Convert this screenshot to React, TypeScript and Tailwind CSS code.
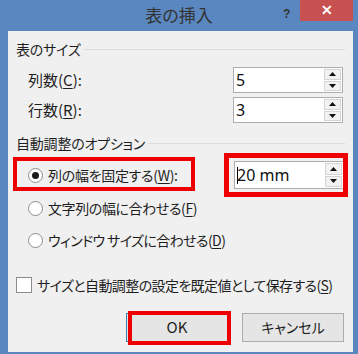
import type { ReactNode } from "react";

const jp = "font-['Meiryo_UI','Noto_Sans_CJK_JP',sans-serif] [font-feature-settings:'palt']";

function Arrow({ up }: { up?: boolean }) {
  return (
    <svg width="7" height="4" viewBox="0 0 7 4" aria-hidden="true">
      {up ? <path d="M0 4 L3.5 0 L7 4 Z" fill="#111" /> : <path d="M0 0 L3.5 4 L7 0 Z" fill="#111" />}
    </svg>
  );
}

function Spin({ value, caret, tall }: { value: string; caret?: boolean; tall?: boolean }) {
  return (
    <div
      className={`flex ${tall ? "h-[28px]" : "h-[26px]"} w-[110px] border border-[#abadb3] bg-white`}
    >
      <div className="flex flex-1 items-center pl-[2px] font-['Noto_Sans',sans-serif] text-[16px] text-[#111]">
        {caret ? <span className="mr-[-1px] h-[17px] w-px bg-black" /> : null}
        {value}
      </div>
      <div className="flex w-[19px] flex-col gap-px bg-white p-px">
        <div className="flex flex-1 items-center justify-center border border-[#d4d4d4] bg-[#f2f2f2]">
          <Arrow up />
        </div>
        <div className="flex flex-1 items-center justify-center border border-[#d4d4d4] bg-[#f2f2f2]">
          <Arrow />
        </div>
      </div>
    </div>
  );
}

function GroupHeader({ children }: { children: ReactNode }) {
  return (
    <div className="flex h-[20px] items-center gap-[3px]">
      <span className="text-[14px] leading-none tracking-[-0.2px]">{children}</span>
      <span className="h-px flex-1 bg-[#dcdcdc]" />
    </div>
  );
}

function Radio({ checked }: { checked?: boolean }) {
  return (
    <span className="flex h-[15px] w-[15px] shrink-0 items-center justify-center rounded-full border border-[#8c8c8c] bg-white">
      {checked ? <span className="h-[7px] w-[7px] rounded-full bg-[#1a1a1a]" /> : null}
    </span>
  );
}

function Key({ k }: { k: string }) {
  return <span className="underline underline-offset-2">{k}</span>;
}

export default function App() {
  return (
    <div className={`flex h-[354px] w-[358px] flex-col bg-[#5b87c0] text-[#1e1e1e] ${jp}`}>
      <div className="flex h-[31px] shrink-0">
        <div className="w-[75px]" />
        <div className="flex flex-1 items-center justify-center pb-[1px] text-[17px] text-[#333]">
          表の挿入
        </div>
        <div className="flex w-[75px] items-start">
          <span className="mt-[5px] w-[17px] font-['Liberation_Sans',sans-serif] text-[12px] font-bold text-[#333]">
            ?
          </span>
          <span className="flex h-[21px] w-[53px] items-center justify-center bg-[#c75050] font-['Liberation_Sans',sans-serif] text-[14px] font-bold text-white">
            ✕
          </span>
        </div>
      </div>

      <div className="mb-[2px] ml-[8px] mr-[5px] flex flex-1 flex-col whitespace-nowrap bg-[#f0f0f0] px-[8px] pt-[8px]">
        <GroupHeader>表のサイズ</GroupHeader>

        <div className="mt-[8px] flex h-[26px] items-center justify-between pl-[12px] pr-[2px] text-[15px]">
          <span>
            列数(<Key k="C" />):
          </span>
          <Spin value="5" />
        </div>
        <div className="mt-[4px] flex h-[26px] items-center justify-between pl-[12px] pr-[2px] text-[15px]">
          <span>
            行数(<Key k="R" />):
          </span>
          <Spin value="3" />
        </div>

        <div className="mt-[10px]">
          <GroupHeader>自動調整のオプション</GroupHeader>
        </div>

        <div className="relative mt-[8px] flex h-[28px] items-center justify-between pl-[12px] pr-[1px] text-[14px] tracking-[-0.3px]">
          <div className="flex items-center gap-[5px]">
            <Radio checked />
            <span>
              列の幅を固定する(<Key k="W" />):
            </span>
          </div>
          <div className="relative tracking-normal">
            <Spin value="20 mm" caret tall />
            <div className="absolute -bottom-[8px] -left-[10px] -right-[4px] -top-[8px] border-[5px] border-[#ee0000]" />
          </div>
          <div className="absolute -top-[4px] left-[-3px] h-[34px] w-[182px] border-[4px] border-[#ee0000]" />
        </div>

        <div className="mt-[7px] flex h-[24px] items-center gap-[5px] pl-[12px] text-[14px] tracking-[-0.4px]">
          <Radio />
          <span>
            文字列の幅に合わせる(<Key k="F" />)
          </span>
        </div>
        <div className="mt-[8px] flex h-[24px] items-center gap-[5px] pl-[12px] text-[14px] tracking-[-0.6px]">
          <Radio />
          <span>
            ウィンドウ サイズに合わせる(<Key k="D" />)
          </span>
        </div>

        <div className="mt-[23px] flex h-[20px] items-center gap-[5px] text-[14px] tracking-[-0.6px]">
          <span className="h-[16px] w-[16px] shrink-0 border border-[#8c8c8c] bg-white" />
          <span>
            サイズと自動調整の設定を既定値として保存する(<Key k="S" />)
          </span>
        </div>

        <div className="mt-[18px] flex justify-end gap-[14px] pr-[1px]">
          <div className="relative">
            <button className="h-[29px] w-[102px] border border-[#3c7fb1] bg-[#e5e5e5] text-[15px] text-[#1e1e1e]">
              OK
            </button>
            <div className="absolute -bottom-[3px] -right-[3px] -top-[2px] left-[2px] border-[4px] border-[#ee0000]" />
          </div>
          <button className="h-[29px] w-[102px] border border-[#acacac] bg-[#e5e5e5] text-[14px] text-[#1e1e1e]">
            キャンセル
          </button>
        </div>
      </div>
    </div>
  );
}
